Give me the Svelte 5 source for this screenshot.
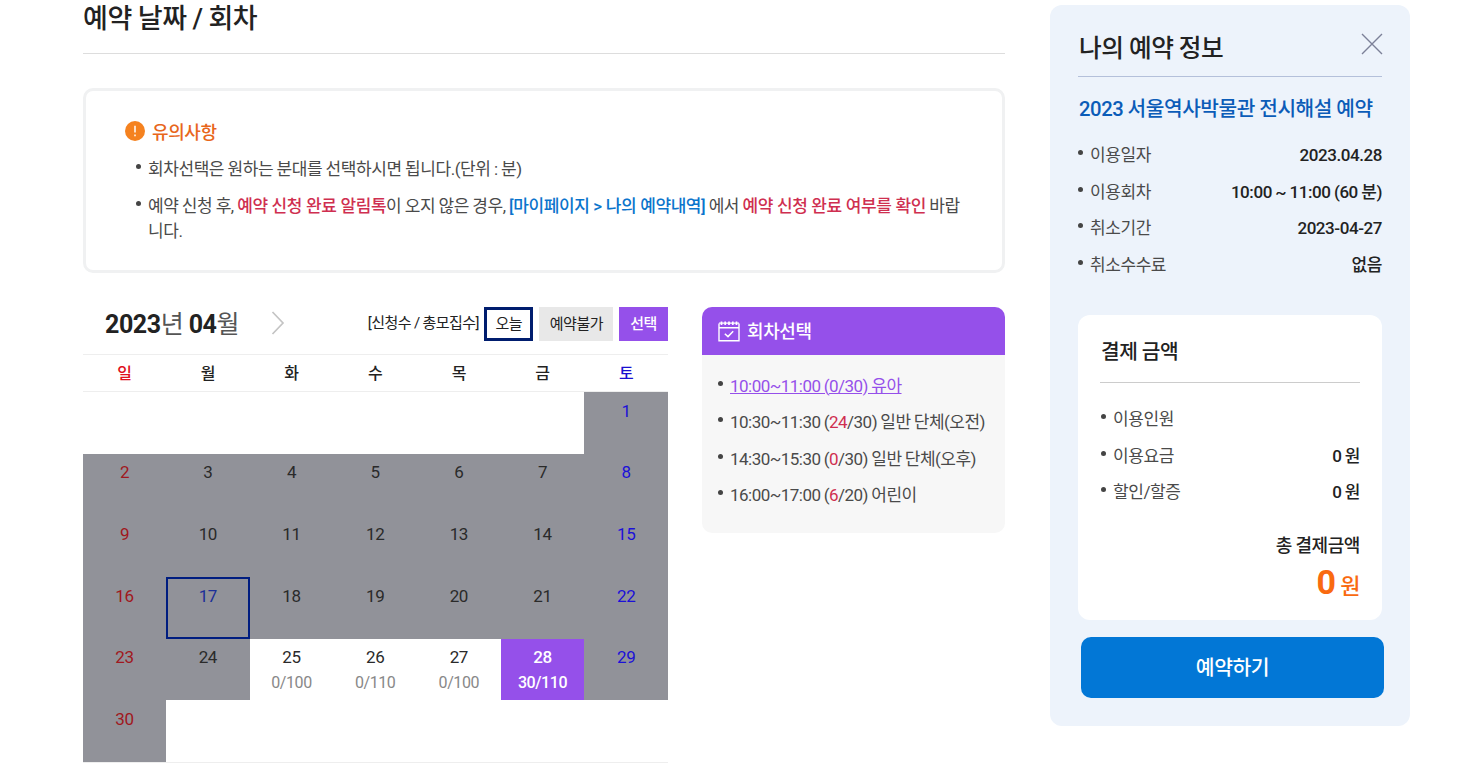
<script lang="ts">
    type Day = { n: number; state?: string; count?: string };

    const weekdays = ["일", "월", "화", "수", "목", "금", "토"];

    // bookable days of the month, everything else is closed
    const open: Record<number, string> = {
        25: "0/100",
        26: "0/110",
        27: "0/100",
        28: "30/110",
    };
    const today = 17;
    const selected = 28;
    const firstWeekday = 6;

    // 6 weeks x 7 days, null = outside of the month
    const cells: (Day | null)[] = Array.from({ length: 42 }, (_, i) => {
        const n = i - firstWeekday + 1;
        if (n < 1 || n > 30) {
            return null;
        }
        const state = n === selected ? "selected" : n in open ? "open" : "closed";
        return { n, state, count: open[n] };
    });

    const sessions = [
        { time: "10:00~11:00", used: 0, max: 30, name: "유아", active: true },
        { time: "10:30~11:30", used: 24, max: 30, name: "일반 단체(오전)" },
        { time: "14:30~15:30", used: 0, max: 30, name: "일반 단체(오후)" },
        { time: "16:00~17:00", used: 6, max: 20, name: "어린이" },
    ];

    const info = [
        ["이용일자", "2023.04.28"],
        ["이용회차", "10:00 ~ 11:00 (60 분)"],
        ["취소기간", "2023-04-27"],
        ["취소수수료", "없음"],
    ];

    const fees = [
        ["이용인원", ""],
        ["이용요금", "0 원"],
        ["할인/할증", "0 원"],
    ];
</script>

<div class="page">
    <main class="content">
        <h2 class="title">예약 날짜 / 회차</h2>

        <section class="notice">
            <h3 class="notice-title">
                <svg width="20" height="20" viewBox="0 0 20 20">
                    <circle cx="10" cy="10" r="10" fill="#f5821f" />
                    <path d="M10 4.8v6.6M10 13.4v1.8" stroke="#fff" stroke-width="1.5" />
                </svg>
                유의사항
            </h3>
            <ul class="bullets">
                <li>회차선택은 원하는 분대를 선택하시면 됩니다.(단위 : 분)</li>
                <li>
                    예약 신청 후, <b class="red">예약 신청 완료 알림톡</b>이 오지 않은 경우,
                    <b class="blue">[마이페이지 &gt; 나의 예약내역]</b> 에서
                    <b class="red">예약 신청 완료 여부를 확인</b> 바랍니다.
                </li>
            </ul>
        </section>

        <div class="booking">
            <section class="calendar">
                <header class="cal-head">
                    <div class="month"><b>2023</b>년 <b>04</b>월</div>
                    <button class="next" aria-label="다음 달">
                        <svg width="14" height="26" viewBox="0 0 14 26">
                            <path d="M1.5 2 L12 13 L1.5 24" fill="none" stroke="#c4c4c4" stroke-width="1.7" />
                        </svg>
                    </button>
                    <div class="legend">
                        <span class="legend-text">[신청수 / 총모집수]</span>
                        <span class="tag tag-today">오늘</span>
                        <span class="tag tag-closed">예약불가</span>
                        <span class="tag tag-selected">선택</span>
                    </div>
                </header>
                <div class="weekdays">
                    {#each weekdays as name}
                        <span>{name}</span>
                    {/each}
                </div>
                <div class="days">
                    {#each cells as day}
                        {#if day}
                            <div class="day {day.state}" class:today={day.n === today}>
                                <span class="num">{day.n}</span>
                                {#if day.count}
                                    <span class="count">{day.count}</span>
                                {/if}
                            </div>
                        {:else}
                            <div class="day"></div>
                        {/if}
                    {/each}
                </div>
            </section>

            <section class="sessions">
                <h3 class="sessions-title">
                    <svg width="22" height="21" viewBox="0 0 22 21" fill="none" stroke="#fff">
                        <path d="M1 2.5V19.7H21V2.5M1 6.8H21" stroke-width="1.4" />
                        <path d="M1 2.2H21" stroke-width="1.2" />
                        <path d="M3.5 .4V4M7.2 .4V4M11 .4V4M14.8 .4V4M18.5 .4V4" stroke-width="1.7" />
                        <path d="M6.8 12.7L10 15.6L15.2 10.3" stroke-width="1.5" />
                    </svg>
                    <span>회차선택</span>
                </h3>
                <ul class="bullets">
                    {#each sessions as s}
                        <li>
                            <span class:active={s.active}
                                >{s.time} (<i class="used">{s.used}</i>/{s.max}) {s.name}</span
                            >
                        </li>
                    {/each}
                </ul>
            </section>
        </div>
    </main>

    <aside class="summary">
        <header class="summary-head">
            <h2>나의 예약 정보</h2>
            <button class="close" aria-label="닫기">
                <svg width="22" height="22" viewBox="0 0 22 22">
                    <path d="M1 1L21 21M21 1L1 21" stroke="#7c8098" stroke-width="1.4" />
                </svg>
            </button>
        </header>
        <h3 class="program">2023 서울역사박물관 전시해설 예약</h3>
        <ul class="bullets rows">
            {#each info as [label, value]}
                <li><span>{label}</span><b>{value}</b></li>
            {/each}
        </ul>
        <div class="payment">
            <h3>결제 금액</h3>
            <ul class="bullets rows">
                {#each fees as [label, value]}
                    <li><span>{label}</span><b>{value}</b></li>
                {/each}
            </ul>
            <div class="total">
                <span class="total-label">총 결제금액</span>
                <span class="total-price"><b>0</b> 원</span>
            </div>
        </div>
        <button class="submit">예약하기</button>
    </aside>
</div>

<style>
    :global(body) {
        background: #fff;
        overflow: hidden;
    }
    .page {
        display: flex;
        align-items: flex-start;
        gap: 45px;
        box-sizing: border-box;
        height: 772px;
        padding-left: 83px;
        overflow: hidden;
        font-family: Roboto, "Noto Sans CJK KR", sans-serif;
        font-size: 17px;
        line-height: 25.5px;
        letter-spacing: -0.025em;
        word-spacing: -0.4px;
        color: #4a4a4a;
    }
    h2,
    h3,
    ul {
        margin: 0;
        padding: 0;
        font-weight: 500;
    }
    ul {
        list-style: none;
        font-weight: 400;
    }
    b {
        font-weight: 500;
    }
    button {
        padding: 0;
        border: 0;
        background: none;
        font: inherit;
        letter-spacing: inherit;
        cursor: pointer;
    }
    svg {
        display: block;
        flex: none;
    }
    .content {
        width: 922px;
    }
    .title {
        box-sizing: border-box;
        height: 54px;
        padding-top: 1px;
        border-bottom: 1px solid #ddd;
        font-size: 27px;
        line-height: 36px;
        color: #222;
    }

    /* bullet lists */
    .bullets {
        display: flex;
        flex-direction: column;
        gap: 11px;
    }
    .bullets li {
        position: relative;
        padding-left: 12px;
    }
    .bullets li::before {
        content: "";
        position: absolute;
        top: 7px;
        left: 0;
        width: 5px;
        height: 5px;
        border-radius: 50%;
        background: #444;
    }
    .rows li {
        display: flex;
        justify-content: space-between;
    }
    .rows b {
        color: #222;
    }

    /* notice */
    .notice {
        box-sizing: border-box;
        height: 185px;
        margin-top: 34px;
        padding: 29px 36px 0 39px;
        border: 3px solid #f0f1f2;
        border-radius: 10px;
    }
    .notice-title {
        display: flex;
        align-items: center;
        gap: 7px;
        margin-bottom: 11px;
        font-size: 18px;
        color: #e8661b;
    }
    .notice-title svg {
        margin-top: -3px;
    }
    .notice .bullets {
        gap: 12px;
        padding-left: 11px;
        line-height: 25px;
        word-break: break-all;
    }
    .notice b {
        word-spacing: 0.2px;
    }
    .red {
        color: #cf2f50;
    }
    .blue {
        color: #0b74cc;
    }

    /* calendar */
    .booking {
        display: flex;
        align-items: flex-start;
        gap: 34px;
        margin-top: 34px;
    }
    .calendar {
        width: 585px;
    }
    .cal-head {
        display: flex;
        align-items: flex-start;
        height: 47px;
        padding-left: 22px;
        border-bottom: 1px solid #eee;
    }
    .month {
        width: 166px;
        font-size: 25px;
        line-height: 35px;
        color: #555;
    }
    .month b {
        font-weight: 700;
        color: #222;
    }
    .next {
        margin-top: 3px;
    }
    .legend {
        display: flex;
        gap: 6px;
        margin-left: auto;
        font-size: 15px;
        line-height: 35px;
        color: #222;
    }
    .legend-text {
        margin-right: -1px;
        line-height: 33px;
        letter-spacing: -0.035em;
    }
    .tag {
        box-sizing: border-box;
        height: 34px;
        padding: 0 11px;
    }
    .tag-today {
        padding: 0 7.5px 0 8.5px;
        border: 3px solid #001d6e;
        line-height: 29px;
    }
    .tag-closed {
        padding: 0 10px 0 11px;
        background: #e8e8e8;
    }
    .tag-selected {
        background: #9550ea;
        font-weight: 500;
        color: #fff;
    }
    .weekdays,
    .days {
        display: grid;
        grid-template-columns: 83px repeat(6, 1fr);
        border-bottom: 1px solid #eee;
        text-align: center;
    }
    .weekdays {
        height: 36px;
        font-size: 16px;
        font-weight: 500;
        line-height: 37px;
        color: #222;
    }
    .weekdays span:first-child {
        color: #e01020;
    }
    .weekdays span:last-child {
        color: #1a0fd0;
    }
    .days {
        grid-template-rows: repeat(6, 61.7px);
    }
    .day {
        display: flex;
        flex-direction: column;
        box-sizing: border-box;
        padding-top: 6.6px;
        line-height: 25px;
        color: #2a2a2a;
    }
    .closed {
        background: #919299;
    }
    .closed:nth-child(7n + 1) {
        color: #a01820;
    }
    .closed:nth-child(7n) {
        color: #1c10d8;
    }
    .today {
        padding-top: 4.6px;
        border: 2px solid #001d80;
        color: #1c2f98;
    }
    .count {
        font-size: 16px;
        color: #888;
    }
    .selected,
    .selected .count {
        background: #9550ea;
        font-weight: 500;
        color: #fff;
    }

    /* sessions */
    .sessions {
        width: 303px;
        height: 226px;
        border-radius: 10px;
        overflow: hidden;
        background: #f7f7f7;
    }
    .sessions-title {
        display: flex;
        align-items: center;
        gap: 7px;
        height: 48px;
        padding-left: 16px;
        background: #9550ea;
        font-size: 18px;
        color: #fff;
    }
    .sessions-title span {
        padding-top: 2px;
    }
    .sessions .bullets {
        padding: 18.5px 0 0 16px;
        letter-spacing: -0.031em;
    }
    .used {
        font-style: normal;
        color: #cf2f50;
    }
    .active,
    .active .used {
        color: #9550ea;
    }
    .active {
        text-decoration: underline;
    }

    /* reservation summary */
    .summary {
        box-sizing: border-box;
        width: 360px;
        height: 721px;
        margin-top: 5px;
        padding: 0 28px;
        border-radius: 12px;
        background: #edf3fb;
    }
    .summary-head {
        display: flex;
        justify-content: space-between;
        height: 71px;
        border-bottom: 1px solid #b4c0da;
    }
    .summary-head h2 {
        padding: 26px 0 0 1px;
        font-size: 24.7px;
        line-height: 36px;
        color: #222;
    }
    .close {
        align-self: flex-start;
        margin: 28px -1px 0 0;
    }
    .program {
        padding: 17px 0 19px 1px;
        font-size: 20.25px;
        line-height: 30px;
        white-space: nowrap;
        color: #0b5cb8;
    }
    .payment {
        box-sizing: border-box;
        height: 305px;
        margin-top: 37px;
        padding: 0 22px;
        border-radius: 12px;
        background: #fff;
    }
    .payment h3 {
        height: 67px;
        padding-left: 1px;
        border-bottom: 1px solid #ccc;
        margin-bottom: 24px;
        font-size: 20.3px;
        line-height: 74px;
        color: #222;
    }
    .payment .bullets {
        padding-left: 1px;
    }
    .total {
        display: flex;
        flex-direction: column;
        align-items: flex-end;
        margin-top: 27px;
    }
    .total-label {
        font-size: 18px;
        font-weight: 500;
        color: #222;
    }
    .total-price {
        font-size: 22px;
        font-weight: 500;
        line-height: 48px;
        color: #f96a10;
    }
    .total-price b {
        font-size: 34px;
        font-weight: 700;
    }
    .submit {
        display: block;
        width: 303px;
        height: 61px;
        margin: 17px 0 0 3px;
        border-radius: 10px;
        background: #0277d6;
        font-size: 20.4px;
        font-weight: 500;
        line-height: 63px;
        color: #fff;
    }
</style>
